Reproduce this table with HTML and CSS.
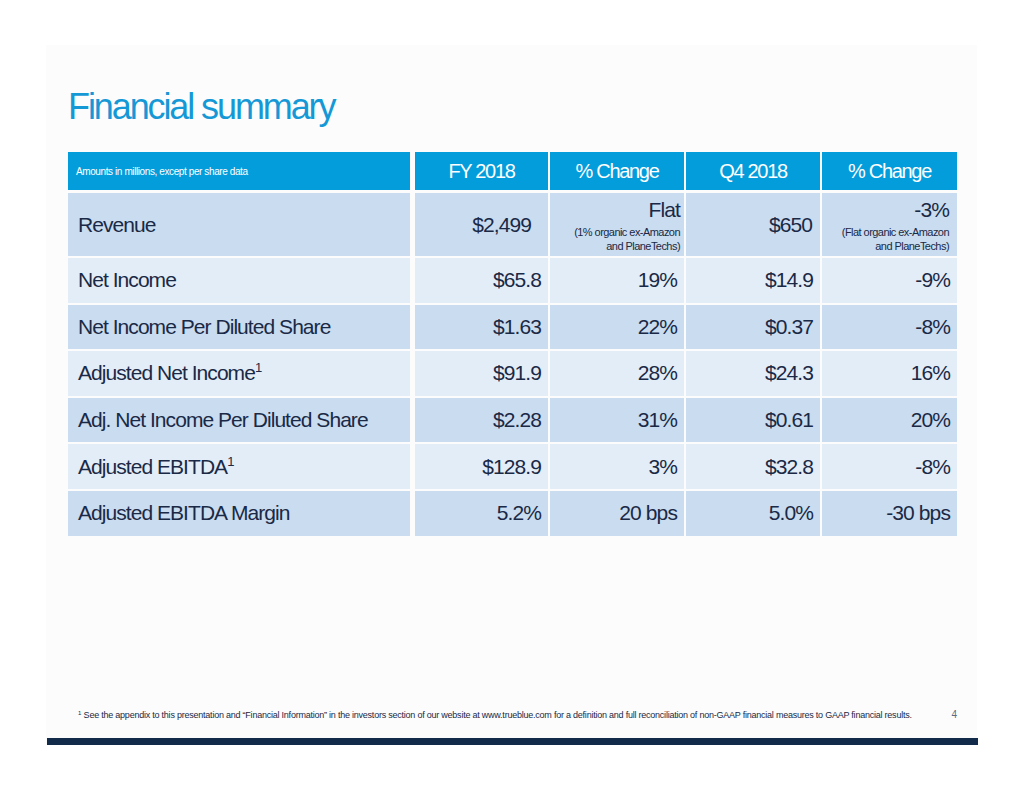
FILE: index.html
```html
<!DOCTYPE html>
<html>
<head>
<meta charset="utf-8">
<link rel="stylesheet" href="styles.css">
</head>
<body>
<div class="slide">
  <h1 class="title">Financial summary</h1>
  <div class="table">
    <div class="hcell first">Amounts in millions, except per share data</div>
    <div class="hcell">FY 2018</div>
    <div class="hcell">% Change</div>
    <div class="hcell">Q4 2018</div>
    <div class="hcell">% Change</div>

    <div class="cell label dark rev"><span>Revenue</span></div>
    <div class="cell num dark rev fy">$2,499</div>
    <div class="cell num dark rev stack flat"><span class="big">Flat</span><span class="note">(1% organic ex-Amazon<br>and PlaneTechs)</span></div>
    <div class="cell num dark rev">$650</div>
    <div class="cell num dark rev stack"><span class="big">-3%</span><span class="note">(Flat organic ex-Amazon<br>and PlaneTechs)</span></div>

    <div class="cell label light"><span>Net Income</span></div>
    <div class="cell num light">$65.8</div>
    <div class="cell num light">19%</div>
    <div class="cell num light">$14.9</div>
    <div class="cell num light">-9%</div>

    <div class="cell label dark"><span>Net Income Per Diluted Share</span></div>
    <div class="cell num dark">$1.63</div>
    <div class="cell num dark">22%</div>
    <div class="cell num dark">$0.37</div>
    <div class="cell num dark">-8%</div>

    <div class="cell label light"><span>Adjusted Net Income<sup>1</sup></span></div>
    <div class="cell num light">$91.9</div>
    <div class="cell num light">28%</div>
    <div class="cell num light">$24.3</div>
    <div class="cell num light">16%</div>

    <div class="cell label dark"><span>Adj. Net Income Per Diluted Share</span></div>
    <div class="cell num dark">$2.28</div>
    <div class="cell num dark">31%</div>
    <div class="cell num dark">$0.61</div>
    <div class="cell num dark">20%</div>

    <div class="cell label light"><span>Adjusted EBITDA<sup>1</sup></span></div>
    <div class="cell num light">$128.9</div>
    <div class="cell num light">3%</div>
    <div class="cell num light">$32.8</div>
    <div class="cell num light">-8%</div>

    <div class="cell label dark"><span>Adjusted EBITDA Margin</span></div>
    <div class="cell num dark">5.2%</div>
    <div class="cell num dark">20 bps</div>
    <div class="cell num dark">5.0%</div>
    <div class="cell num dark">-30 bps</div>
  </div>
  <div class="footer">
    <p class="footnote"><sup>1</sup> See the appendix to this presentation and “Financial Information” in the investors section of our website at www.trueblue.com for a definition and full reconciliation of non-GAAP financial measures to GAAP financial results.</p>
    <span class="page">4</span>
  </div>
  <div class="bar"></div>
</div>
</body>
</html>
```
FILE: styles.css
```css
html, body {
  margin: 0;
  padding: 0;
  background: #ffffff;
}
body {
  padding: 45px 0 0 46px;
  font-family: "Liberation Sans", Arial, sans-serif;
}
.slide {
  width: 931px;
  height: 700px;
  background: #fcfcfc;
  box-sizing: border-box;
  padding: 44px 0 0 22px;
  display: flex;
  flex-direction: column;
}
.title {
  margin: 0;
  font-size: 36px;
  line-height: 36px;
  font-weight: normal;
  letter-spacing: -2.1px;
  color: #1598d6;
  height: 36px;
}
.table {
  margin-top: 27px;
  display: grid;
  grid-template-columns: 345px 133px 134px 134px 135px;
  grid-template-rows: 39px 63px repeat(6, 44.6px);
  column-gap: 2px;
  row-gap: 2px;
  width: 889px;
}
.hcell {
  background: #049ddb;
  color: #ffffff;
  font-size: 20px;
  letter-spacing: -1.3px;
  display: flex;
  align-items: center;
  justify-content: center;
  margin-bottom: 1px;
}
.hcell.first {
  justify-content: flex-start;
  font-size: 10px;
  letter-spacing: -0.4px;
  padding-left: 8px;
  margin-right: 3px;
}
.cell {
  color: #1a2945;
  font-size: 21px;
  letter-spacing: -0.9px;
  display: flex;
  align-items: center;
}
.label {
  padding-left: 10px;
  letter-spacing: -0.95px;
  margin-right: 3px;
}
.num {
  justify-content: flex-end;
  padding-right: 7px;
}
.rev.num {
  padding-right: 8px;
}
.rev.fy {
  padding-right: 17px;
}
.rev.flat {
  padding-right: 4px;
}
.dark { background: #c9dcf0; }
.light { background: #e3edf8; }
.stack {
  flex-direction: column;
  align-items: flex-end;
  justify-content: flex-start;
  padding-top: 6px;
}
.big {
  line-height: 22px;
}
.note {
  font-size: 11px;
  letter-spacing: -0.55px;
  line-height: 14px;
  text-align: right;
  margin-top: 4px;
}
sup {
  font-size: 13px;
  line-height: 0;
  vertical-align: 8px;
  letter-spacing: 0;
}
.footer {
  margin-top: auto;
  display: flex;
  align-items: center;
  justify-content: space-between;
  padding: 0 20px 0 10px;
  margin-bottom: 18px;
}
.footnote {
  margin: 0;
  font-size: 9px;
  letter-spacing: -0.23px;
  color: #1a2945;
}
.footnote sup {
  font-size: 6px;
  vertical-align: 3px;
}
.page {
  font-size: 10px;
  color: #5c6b80;
}
.bar {
  height: 7px;
  background: #132b4a;
  margin-left: -21px;
  width: 931px;
}
```
